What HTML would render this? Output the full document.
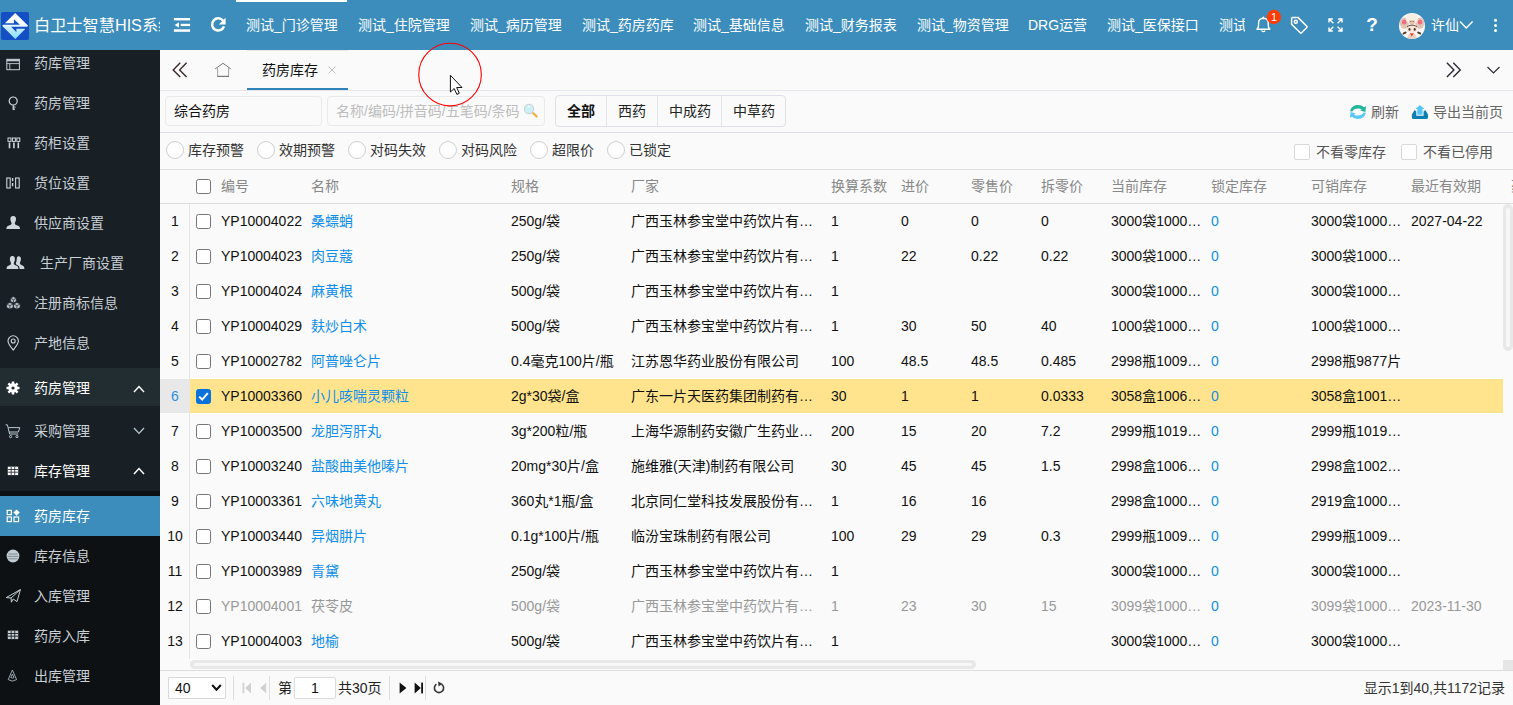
<!DOCTYPE html>
<html lang="zh-CN">
<head>
<meta charset="utf-8">
<title>白卫士智慧HIS系统</title>
<style>
*{box-sizing:border-box}
html,body{margin:0;padding:0}
body{width:1513px;height:705px;overflow:hidden;position:relative;background:#fafafa;
 font-family:"Liberation Sans","Noto Sans CJK SC",sans-serif;font-size:14px;color:#111;line-height:1}
.abs{position:absolute}
#hd{position:absolute;left:0;top:0;width:1513px;height:50px;background:#3c8dbc;color:#fff}
#hd .nav{position:absolute;top:0;height:50px;line-height:50px;white-space:nowrap;font-size:14px}
#logo{position:absolute;left:0;top:0;width:160px;height:50px;overflow:hidden;white-space:nowrap}
#logo .t{position:absolute;left:34px;top:0;line-height:50px;font-size:16.2px}
#sb{position:absolute;left:0;top:50px;width:160px;height:655px;background:#181f25;overflow:hidden;color:#c8d0d5}
#sb .it{position:absolute;left:0;width:160px;height:40px;line-height:40px;white-space:nowrap}
#sb .it span{position:absolute;top:0}
#sb .it svg{position:absolute}
#tabs{position:absolute;left:160px;top:50px;width:1353px;height:41px;border-bottom:1px solid #e4e6ec;background:#fafafa}
.tx{position:absolute;white-space:nowrap;line-height:20px;height:20px}
.hl{position:absolute;height:1px;background:#e2e4ea}
#grid{position:absolute;left:160px;top:169px;width:1353px;height:490px;overflow:hidden}
.row{position:absolute;left:0;width:1343px;height:35px;line-height:35px;overflow:hidden}
.row.hdr{width:1353px}
.row .c{position:absolute;top:0;height:35px;white-space:nowrap;overflow:hidden;text-overflow:ellipsis;padding:0 4px}
.row .n{left:0;width:30px;text-align:center;padding:0}
.cb{position:absolute;left:36px;top:10px;width:15px;height:15px;border:1.5px solid #767676;border-radius:2.5px;background:#fff}
.cb.on{background:#0b72dc;border-color:#0b72dc}
.c1{left:57px;width:90px}.c2{left:147px;width:200px;color:#108ee9}.c3{left:347px;width:120px}.c4{left:467px;width:200px}
.c5{left:667px;width:70px}.c6{left:737px;width:70px}.c7{left:807px;width:70px}.c8{left:877px;width:70px}
.c9{left:947px;width:100px}.c10{left:1047px;width:100px;color:#108ee9}.c11{left:1147px;width:100px}.c12{left:1247px;width:100px}
.hdr{color:#888}
.hdr .c{height:34px}
.hdr .c2,.hdr .c10{color:#888}
.sel .bg{position:absolute;left:30px;top:0;width:1313px;height:34px;background:#ffe48d}
.dis{color:#999}.dis .c2{color:#999}
.rd{position:absolute;top:141px;width:18px;height:18px;border:1px solid #cfcfcf;border-radius:50%;background:#fff}
.ck{position:absolute;top:144px;width:16px;height:16px;border:1px solid #d9d9d9;border-radius:2px;background:#fff}

</style>
</head>
<body>
<div id="hd"><div class="abs" style="left:236px;top:0;width:111px;height:2px;background:#fff"></div><svg class="abs" style="left:1px;top:12px" width="28" height="28" viewBox="0 0 28 28"><defs><linearGradient id="lg" x1="0" y1="0" x2="0" y2="1"><stop offset="0" stop-color="#fff"/><stop offset="0.42" stop-color="#f8fdff"/><stop offset="0.55" stop-color="#cfeeff"/><stop offset="1" stop-color="#82e0ff"/></linearGradient></defs><rect width="28" height="28" rx="1.8" fill="#1450c4"/><path d="M14.2 0.9 L27.1 13.8 L26.1 14.85 L18.9 14.85 L18.9 12.86 L1.9 12.86 L1.3 14 L14.3 26.9 L24.4 16.8 L10.1 16.8 L10.1 14.85 L15.4 20.2 L15.4 16.8 L10.1 16.8 L10.1 14.85 L18.9 14.85 L18.9 12.86 L12.9 7.2 L12.9 11.16 L4 11.16 Z" fill="url(#lg)" fill-rule="evenodd"/></svg>
<div id="logo"><span class="t">白卫士智慧HIS系统</span></div><svg class="abs" style="left:173px;top:17px" width="19" height="16" viewBox="0 0 19 16" fill="#fff"><rect x="0.9" y="1" width="16.2" height="2.4"/><rect x="7.7" y="6.8" width="9.4" height="2.3"/><rect x="0.9" y="12.3" width="16.2" height="2.5"/><path d="M1.7 8 L6 5.3 V10.7 Z"/></svg>
<svg class="abs" style="left:209px;top:16px" width="18" height="18" viewBox="0 0 18 18"><path d="M14.2 4.9 A6.1 6.1 0 1 0 15 10.4" fill="none" stroke="#fff" stroke-width="2.5"/><path d="M16.6 1.8 V8.6 H9.8 Z" fill="#fff"/></svg>
<svg class="abs" style="left:1254px;top:8px" width="30" height="28" viewBox="0 0 30 28"><path d="M9.3 8.8 a1.2 1.2 0 0 1 -0.6 1.1 M3 21.2 H15.8 Q14.2 19.6 14.2 16.4 V14.6 Q14.2 10.4 9.4 10.2 Q4.6 10.4 4.6 14.6 V16.4 Q4.6 19.6 3 21.2 Z" fill="none" stroke="#fff" stroke-width="1.4" stroke-linejoin="round"/><path d="M7.6 22.6 Q9.4 24.6 11.2 22.6" fill="none" stroke="#fff" stroke-width="1.4"/><circle cx="9.4" cy="9.6" r="0.9" fill="#fff"/><circle cx="19.9" cy="9" r="7.2" fill="#ff3d00"/></svg>
<div class="abs" style="left:1267px;top:10px;width:14px;height:14px;line-height:14px;text-align:center;font-size:11px;color:#fff">1</div>
<svg class="abs" style="left:1290px;top:16px" width="19" height="19" viewBox="0 0 19 19" fill="none" stroke="#fff" stroke-width="1.5" stroke-linejoin="round"><path d="M1.6 2.6 Q1.6 1.6 2.6 1.6 H8.2 L16.8 10.2 Q17.4 10.9 16.8 11.5 L11.5 16.8 Q10.9 17.4 10.2 16.8 L1.6 8.2 Z"/><circle cx="5.8" cy="5.8" r="1.5"/></svg>
<svg class="abs" style="left:1328px;top:18px" width="15" height="14" viewBox="0 0 15 14" fill="none" stroke="#fff" stroke-width="1.4"><path d="M1 4.6 V1 H4.8 M1 1 L5.4 5.2 M10.2 1 H14 V4.6 M14 1 L9.6 5.2 M1 9.4 V13 H4.8 M1 13 L5.4 8.8 M10.2 13 H14 V9.4 M14 13 L9.6 8.8"/></svg>
<div class="abs" style="left:1366px;top:14px;width:12px;height:22px;line-height:22px;font-size:19px;font-weight:bold;color:#fff;text-align:center">?</div>
<svg class="abs" style="left:1398px;top:12px" width="28" height="28" viewBox="0 0 28 28"><defs><clipPath id="av"><circle cx="14" cy="14" r="13"/></clipPath></defs><circle cx="14" cy="14" r="13" fill="#fdf8f6"/><g clip-path="url(#av)"><ellipse cx="6.4" cy="11.2" rx="4.5" ry="5.6" fill="#e3c3b2"/><ellipse cx="21.8" cy="11.2" rx="4.5" ry="5.6" fill="#e3c3b2"/><ellipse cx="6.2" cy="10" rx="2.3" ry="2.5" fill="#ef6c84"/><ellipse cx="22" cy="10" rx="2.3" ry="2.5" fill="#ef6c84"/><ellipse cx="14" cy="6.8" rx="6" ry="5.4" fill="#f7eee4"/><ellipse cx="14" cy="10" rx="3" ry="2" fill="#e2c2ac"/><circle cx="12.8" cy="9.6" r="0.5" fill="#6a4a3a"/><circle cx="15.2" cy="9.6" r="0.5" fill="#6a4a3a"/><path d="M9 14.6 Q14 10.4 19 14.6 L18.6 15.4 Q14 12.6 9.4 15.4 Z" fill="#4e3426"/><ellipse cx="14" cy="17.3" rx="5.2" ry="3.8" fill="#fbe4dc"/><ellipse cx="11.5" cy="17.4" rx="1" ry="1.3" fill="#3a3418"/><ellipse cx="16.7" cy="17.4" rx="1" ry="1.3" fill="#3a3418"/><ellipse cx="6.6" cy="21" rx="2.2" ry="1.2" transform="rotate(-25 6.6 21)" fill="#5a3e30"/><ellipse cx="21.2" cy="21" rx="2.2" ry="1.2" transform="rotate(25 21.2 21)" fill="#5a3e30"/><path d="M9.4 27 Q9.6 22.6 12 21.8 H16 Q18.4 22.6 18.6 27 Z" fill="#ead0c0"/><path d="M11.8 21.2 H15.8 L13.8 24.4 Z" fill="#f0402a"/></g></svg>
<svg class="abs" style="left:1459px;top:20px" width="15" height="10" viewBox="0 0 15 10" fill="none" stroke="#fff" stroke-width="1.4"><path d="M1 1.4 L7.2 8 L13.6 1.4"/></svg>
<svg class="abs" style="left:1492px;top:18px" width="7" height="15" viewBox="0 0 7 15" fill="#fff"><circle cx="3.5" cy="2.2" r="1.5"/><circle cx="3.5" cy="7.4" r="1.5"/><circle cx="3.5" cy="12.6" r="1.5"/></svg>
<div class="nav" style="left:246px">测试_门诊管理</div><div class="nav" style="left:358px">测试_住院管理</div><div class="nav" style="left:470px">测试_病历管理</div><div class="nav" style="left:582px">测试_药房药库</div><div class="nav" style="left:693px">测试_基础信息</div><div class="nav" style="left:805px">测试_财务报表</div><div class="nav" style="left:917px">测试_物资管理</div><div class="nav" style="left:1028px">DRG运营</div><div class="nav" style="left:1107px">测试_医保接口</div><div class="nav" style="left:1219px;width:26px;overflow:hidden">测试_</div><div class="nav" style="left:1431px">许仙</div></div>
<div id="sb"><div class="abs" style="left:0;top:318px;width:160px;height:38px;background:#222d32"></div><div class="abs" style="left:0;top:441px;width:160px;height:214px;background:#0d1114"></div><div class="abs" style="left:0;top:446px;width:160px;height:40px;background:#3c8dbc"></div><div class="it" style="top:-7px"><svg style="left:6px;top:14.5px" width="15" height="13" viewBox="0 0 15 13" fill="none" stroke="#c2cdd3"><rect x="0.8" y="1.3" width="12.6" height="10.4" stroke-width="1"/><path d="M0.8 2.3 H13.4" stroke-width="2"/><path d="M0.8 5.6 H13.4 M3.8 5.6 V11.6" stroke-width="0.9"/></svg><span style="left:34px">药库管理</span></div><div class="it" style="top:33px"><svg style="left:8px;top:13px" width="11" height="15" viewBox="0 0 11 15" fill="none" stroke="#cfd8dc" stroke-width="1.2"><circle cx="5.2" cy="5" r="4"/><path d="M5.2 9 V14 M5.2 11 H7.6 M5.2 13.2 H7"/></svg><span style="left:34px">药房管理</span></div><div class="it" style="top:73px"><svg style="left:7px;top:14px" width="14" height="12" viewBox="0 0 14 12" fill="none" stroke="#cfd8dc" stroke-width="1"><rect x="1" y="1" width="3" height="3.4"/><rect x="5.4" y="1" width="3" height="3.4"/><rect x="9.8" y="1" width="3" height="3.4"/><path d="M2.5 5.6 V11.2 M6.9 5.6 V11.2 M11.3 5.6 V11.2" stroke-width="1.6"/></svg><span style="left:34px">药柜设置</span></div><div class="it" style="top:113px"><svg style="left:6px;top:14px" width="15" height="12" viewBox="0 0 15 12" fill="none" stroke="#cfd8dc" stroke-width="1.1"><rect x="0.8" y="1" width="3.4" height="10"/><rect x="9.6" y="1" width="3.6" height="10"/><path d="M6.6 1 V11" stroke-width="1.4" stroke-dasharray="3.2 1.8"/></svg><span style="left:34px">货位设置</span></div><div class="it" style="top:153px"><svg style="left:6px;top:12px" width="15" height="15" viewBox="0 0 15 15" fill="#cfd8dc"><path d="M7.2 0.9 C9.4 0.9 10.2 2.6 10 4.6 C9.8 6.4 9 7.4 8.8 8.2 C8.8 9.6 10.2 10 12 10.8 C13.6 11.5 14 12.4 14 14 H0.4 C0.4 12.4 0.8 11.5 2.4 10.8 C4.2 10 5.6 9.6 5.6 8.2 C5.4 7.4 4.6 6.4 4.4 4.6 C4.2 2.6 5 0.9 7.2 0.9 Z"/></svg><span style="left:34px">供应商设置</span></div><div class="it" style="top:193px"><svg style="left:6px;top:12px" width="20" height="15" viewBox="0 0 20 15" fill="#cfd8dc"><path d="M6.4 0.9 C8.4 0.9 9.1 2.6 8.9 4.6 C8.7 6.4 8 7.4 7.8 8.2 C7.8 9.6 9 10 10.6 10.8 C12.1 11.5 12.4 12.4 12.4 14 H0.6 C0.6 12.4 0.9 11.5 2.4 10.8 C4 10 5 9.6 5 8.2 C4.8 7.4 4.1 6.4 3.9 4.6 C3.7 2.6 4.4 0.9 6.4 0.9 Z"/><path d="M12.6 1.2 C14.5 1.2 15.1 2.8 14.9 4.6 C14.7 6.3 14.1 7.2 13.9 8 C13.9 9.3 15 9.8 16.4 10.5 C17.9 11.2 18.4 12 18.4 14 H13.6 C13.6 12 13 10.8 11.2 10 C10.2 9.5 9.8 9 9.8 8.2 C10.3 7.2 10.7 6 10.7 4.2 C10.7 2.6 11.3 1.2 12.6 1.2 Z"/></svg><span style="left:40px">生产厂商设置</span></div><div class="it" style="top:233px"><svg style="left:6px;top:13px" width="15" height="14" viewBox="0 0 15 14" fill="#b9c4ca" stroke="#191e24" stroke-width="0.7"><path d="M7.4 0.6 L10.4 2.2 V5.4 L7.4 7 L4.4 5.4 V2.2 Z"/><path d="M3.9 6.4 L7.2 8 V11.6 L3.9 13.2 L0.6 11.6 V8 Z"/><path d="M10.9 6.4 L14.2 8 V11.6 L10.9 13.2 L7.6 11.6 V8 Z"/><path d="M4.4 2.2 L7.4 3.8 L10.4 2.2 M7.4 3.8 V7 M0.6 8 L3.9 9.6 L7.2 8 M3.9 9.6 V13.2 M7.6 8 L10.9 9.6 L14.2 8 M10.9 9.6 V13.2" fill="none"/></svg><span style="left:34px">注册商标信息</span></div><div class="it" style="top:273px"><svg style="left:7px;top:12.4px" width="13" height="16" viewBox="0 0 13 16" fill="none" stroke="#cfd8dc" stroke-width="1.1"><path d="M6.2 15 C3 11 1 8.6 1 6 A5.2 5.2 0 0 1 11.4 6 C11.4 8.6 9.4 11 6.2 15 Z"/><circle cx="6.2" cy="6" r="2"/></svg><span style="left:34px">产地信息</span></div><div class="it" style="top:318px;color:#fff"><svg style="left:6px;top:13.4px" width="14" height="14" viewBox="0 0 14 14"><g stroke="#fff" stroke-width="2.5"><path d="M7 0.5 V13.5 M0.5 7 H13.5 M2.4 2.4 L11.6 11.6 M2.4 11.6 L11.6 2.4"/></g><circle cx="7" cy="7" r="4.7" fill="#fff"/><circle cx="7" cy="7" r="1.6" fill="#222d32"/></svg><svg style="left:133px;top:16.6px" width="12" height="8" viewBox="0 0 12 8" fill="none" stroke="#fff" stroke-width="1.5"><path d="M1 7 L6 1.6 L11 7"/></svg><span style="left:34px">药房管理</span></div><div class="it" style="top:361px"><svg style="left:5px;top:12.7px" width="16" height="15" viewBox="0 0 16 15" fill="none" stroke="#b8c7ce" stroke-width="1"><path d="M0.6 0.8 H2.4 L4.6 10 H13.2 M3.4 3.6 H14.8 L13.4 8 H4.2"/><circle cx="5.6" cy="12.6" r="1.1"/><circle cx="12" cy="12.6" r="1.1"/></svg><svg style="left:133px;top:16.4px" width="12" height="8" viewBox="0 0 12 8" fill="none" stroke="#b8c7ce" stroke-width="1.3"><path d="M1 1 L6 6.4 L11 1"/></svg><span style="left:34px">采购管理</span></div><div class="it" style="top:401px;color:#fff"><svg style="left:7px;top:15px" width="12" height="10" viewBox="0 0 12 10"><rect x="0.8" y="0.7" width="10.4" height="8.4" fill="#fff"/><path d="M1 3.5 H11 M1 6.2 H11 M4.2 1 V9 M7.7 1 V9" stroke="#191e24" stroke-width="0.8"/></svg><svg style="left:133px;top:16.4px" width="12" height="8" viewBox="0 0 12 8" fill="none" stroke="#fff" stroke-width="1.5"><path d="M1 7 L6 1.6 L11 7"/></svg><span style="left:34px">库存管理</span></div><div class="it" style="top:446px;color:#fff"><svg style="left:6px;top:13.4px" width="15" height="14" viewBox="0 0 15 14" fill="none" stroke="#fff" stroke-width="1.2"><rect x="1.2" y="1.4" width="4.2" height="4.2"/><rect x="1.2" y="8" width="4.2" height="4.6"/><rect x="8" y="8" width="4.6" height="4.6"/><path d="M10.6 0.4 L13.8 3.6 L10.6 6.8 L7.4 3.6 Z" fill="#fff" stroke="none"/></svg><span style="left:34px">药房库存</span></div><div class="it" style="top:486px"><svg style="left:6px;top:12.8px" width="14" height="14" viewBox="0 0 14 14"><circle cx="7" cy="7" r="6.4" fill="#c2cdd3"/><path d="M2.4 5 H11.6 M1.6 7.4 H12.4 M2.6 9.8 H11.4" stroke="#6f7b82" stroke-width="0.8"/></svg><span style="left:34px">库存信息</span></div><div class="it" style="top:526px"><svg style="left:5px;top:12px" width="17" height="16" viewBox="0 0 17 16" fill="none" stroke="#c2cdd3" stroke-width="1" stroke-linejoin="round"><path d="M1.2 9.6 L15.4 1.6 L12 13.6 L8.2 11 L6.4 14.2 L6 10 Z M6 10 L15.4 1.6"/></svg><span style="left:34px">入库管理</span></div><div class="it" style="top:566px"><svg style="left:7px;top:14px" width="12" height="10" viewBox="0 0 12 10"><rect x="0.8" y="0.7" width="10.4" height="8.4" fill="#c2cdd3"/><path d="M1 3.5 H11 M1 6.2 H11 M4.2 1 V9 M7.7 1 V9" stroke="#0d1114" stroke-width="0.8"/></svg><span style="left:34px">药房入库</span></div><div class="it" style="top:606px"><svg style="left:7px;top:13.2px" width="11" height="14" viewBox="0 0 11 14" fill="none" stroke="#aab6bc" stroke-width="0.9"><path d="M5.4 1 L9.6 10.6 Q5.4 13.6 1.2 10.6 Z"/><path d="M5.4 5 L7 8.6 Q5.4 9.6 3.8 8.6 Z"/></svg><span style="left:34px">出库管理</span></div></div>
<div id="tabs">
<div class="abs" style="left:87px;top:0;width:101px;height:1px;background:#e8e8ee"></div>
<svg class="abs" style="left:11px;top:12px" width="18" height="16" viewBox="0 0 18 16" fill="none" stroke="#3a2a2a" stroke-width="1.4"><path d="M9.2 0.8 L2.2 7.95 L9.2 15.1 M15.6 0.8 L8.6 7.95 L15.6 15.1"/></svg>
<svg class="abs" style="left:53px;top:12px" width="20" height="17" viewBox="0 0 20 17" fill="none" stroke="#777" stroke-width="1"><path d="M2.2 6.9 L10 1.3 L17.8 6.9"/><path d="M4.6 5.6 V14.3 M15.6 5.6 V14.3" stroke="#999" stroke-width="0.9"/><path d="M4.2 14.4 H16" stroke-width="1.2"/></svg>
<div class="tx" style="left:102px;top:10px;color:#111">药房库存</div>
<svg class="abs" style="left:167px;top:15px" width="10" height="10" viewBox="0 0 10 10" stroke="#c0c0c0" stroke-width="1"><path d="M1.5 1.5 L8.5 8.5 M8.5 1.5 L1.5 8.5"/></svg>
<div class="abs" style="left:87px;top:38px;width:101px;height:2px;background:#2e82b8"></div>
<svg class="abs" style="left:1285px;top:12px" width="17" height="16" viewBox="0 0 17 16" fill="none" stroke="#2a2a3a" stroke-width="1.4"><path d="M1.9 0.8 L8.9 7.95 L1.9 15.1 M8.3 0.8 L15.3 7.95 L8.3 15.1"/></svg>
<svg class="abs" style="left:1326px;top:15px" width="15" height="10" viewBox="0 0 15 10" fill="none" stroke="#2a2a3a" stroke-width="1.15"><path d="M1.5 2 L7.5 7.9 L13.5 2"/></svg>
</div>

<div class="abs" style="left:165px;top:96px;width:157px;height:30px;border:1px solid #eaeaea;border-radius:4px;background:#fafafa"></div>
<div class="tx" style="left:174px;top:101px;color:#111">综合药房</div>
<div class="abs" style="left:327px;top:96px;width:218px;height:30px;border:1px solid #eaeaea;border-radius:4px;background:#fafafa"></div>
<div class="tx" style="left:336px;top:101px;color:#bdbdbd;width:184px;overflow:hidden">名称/编码/拼音码/五笔码/条码</div>
<svg class="abs" style="left:523px;top:103px" width="16" height="16" viewBox="0 0 16 16"><path d="M10 10 L13.7 13.5" stroke="#efb044" stroke-width="2.2" stroke-linecap="round"/><circle cx="6" cy="6" r="4.6" fill="#cdf0f6" stroke="#cdd3d6" stroke-width="1.1"/><circle cx="5.6" cy="3.6" r="1" fill="#f4fdff"/></svg>
<div class="abs" style="left:555px;top:95px;width:231px;height:32px;border:1px solid #dfe1e8;border-radius:4px;background:#fafafa"></div>
<div class="abs" style="left:606px;top:96px;width:1px;height:30px;background:#e2e4ea"></div>
<div class="abs" style="left:657px;top:96px;width:1px;height:30px;background:#e2e4ea"></div>
<div class="abs" style="left:721px;top:96px;width:1px;height:30px;background:#e2e4ea"></div>
<div class="tx" style="left:567px;top:101px;color:#111;font-weight:bold">全部</div>
<div class="tx" style="left:618px;top:101px;color:#222">西药</div>
<div class="tx" style="left:669px;top:101px;color:#222">中成药</div>
<div class="tx" style="left:733px;top:101px;color:#222">中草药</div>
<svg class="abs" style="left:1350px;top:105px" width="17" height="14" viewBox="0 0 17 14"><path d="M0.2 6.2 C0.6 2.6 4 0.1 8 0.1 C10.4 0.1 12.4 0.9 13.8 2.2 L16 1.2 L15.4 7 L10.2 5.6 L12 4.6 C11 3.8 9.6 3.4 8 3.4 C5.2 3.4 3.2 4.6 2.4 6.4 Z" fill="#20b69a"/><path d="M15.8 7.8 C15.4 11.4 12 13.9 8 13.9 C5.6 13.9 3.6 13.1 2.2 11.8 L0 12.8 L0.6 7 L5.8 8.4 L4 9.4 C5 10.2 6.4 10.6 8 10.6 C10.8 10.6 12.8 9.4 13.6 7.6 Z" fill="#58c9f6"/></svg>
<div class="tx" style="left:1371px;top:102px;color:#666">刷新</div>
<svg class="abs" style="left:1411px;top:105px" width="18" height="14" viewBox="-0.9 0 18 14"><path d="M2.7 5.1 L4.4 6.4 V10.7 H11.7 V6.4 L13.4 5.1 L16.1 9.4 V12.6 Q16.1 13.9 14.8 13.9 H1.3 Q0 13.9 0 12.6 V9.4 Z" fill="#0e7fb2"/><path d="M8.05 0 L12.5 3.9 H10.7 V9.8 H5.35 V3.9 H3.6 Z" fill="#55c8f8"/></svg>
<div class="tx" style="left:1433px;top:102px;color:#666">导出当前页</div>
<div class="hl" style="left:160px;top:132px;width:1353px;background:#dcdfe8"></div>
<!-- filter row -->
<div class="rd" style="left:166px"></div><div class="tx" style="left:188px;top:140px;color:#333">库存预警</div>
<div class="rd" style="left:257px"></div><div class="tx" style="left:279px;top:140px;color:#333">效期预警</div>
<div class="rd" style="left:348px"></div><div class="tx" style="left:370px;top:140px;color:#333">对码失效</div>
<div class="rd" style="left:439px"></div><div class="tx" style="left:461px;top:140px;color:#333">对码风险</div>
<div class="rd" style="left:530px"></div><div class="tx" style="left:552px;top:140px;color:#333">超限价</div>
<div class="rd" style="left:607px"></div><div class="tx" style="left:629px;top:140px;color:#333">已锁定</div>
<div class="ck" style="left:1294px"></div><div class="tx" style="left:1316px;top:142px;color:#555">不看零库存</div>
<div class="ck" style="left:1401px"></div><div class="tx" style="left:1423px;top:142px;color:#555">不看已停用</div>
<div class="hl" style="left:160px;top:169px;width:1353px;background:#dedede"></div>

<div id="grid"><div class="row hdr" style="top:0;height:34px;line-height:34px"><div class="cb"></div><div class="c c1">编号</div><div class="c c2">名称</div><div class="c c3">规格</div><div class="c c4">厂家</div><div class="c c5">换算系数</div><div class="c c6">进价</div><div class="c c7">零售价</div><div class="c c8">拆零价</div><div class="c c9">当前库存</div><div class="c c10">锁定库存</div><div class="c c11">可销库存</div><div class="c c12">最近有效期</div><div class="c" style="left:1347px;width:20px">药</div></div><div class="abs" style="left:29px;top:34px;width:1px;height:456px;background:#e6e6e6"></div><div class="abs" style="left:0;top:34px;width:1353px;height:1px;background:#dcdcdc"></div><div class="row" style="top:35px"><div class="c n" style="color:#111">1</div><div class="cb"></div><div class="c c1">YP10004022</div><div class="c c2">桑螵蛸</div><div class="c c3">250g/袋</div><div class="c c4">广西玉林参宝堂中药饮片有限公司</div><div class="c c5">1</div><div class="c c6">0</div><div class="c c7">0</div><div class="c c8">0</div><div class="c c9">3000袋10000克</div><div class="c c10">0</div><div class="c c11">3000袋10000克</div><div class="c c12">2027-04-22</div></div><div class="row" style="top:70px"><div class="c n" style="color:#111">2</div><div class="cb"></div><div class="c c1">YP10004023</div><div class="c c2">肉豆蔻</div><div class="c c3">250g/袋</div><div class="c c4">广西玉林参宝堂中药饮片有限公司</div><div class="c c5">1</div><div class="c c6">22</div><div class="c c7">0.22</div><div class="c c8">0.22</div><div class="c c9">3000袋10000克</div><div class="c c10">0</div><div class="c c11">3000袋10000克</div><div class="c c12"></div></div><div class="row" style="top:105px"><div class="c n" style="color:#111">3</div><div class="cb"></div><div class="c c1">YP10004024</div><div class="c c2">麻黄根</div><div class="c c3">500g/袋</div><div class="c c4">广西玉林参宝堂中药饮片有限公司</div><div class="c c5">1</div><div class="c c6"></div><div class="c c7"></div><div class="c c8"></div><div class="c c9">3000袋10000克</div><div class="c c10">0</div><div class="c c11">3000袋10000克</div><div class="c c12"></div></div><div class="row" style="top:140px"><div class="c n" style="color:#111">4</div><div class="cb"></div><div class="c c1">YP10004029</div><div class="c c2">麸炒白术</div><div class="c c3">500g/袋</div><div class="c c4">广西玉林参宝堂中药饮片有限公司</div><div class="c c5">1</div><div class="c c6">30</div><div class="c c7">50</div><div class="c c8">40</div><div class="c c9">1000袋10000克</div><div class="c c10">0</div><div class="c c11">1000袋10000克</div><div class="c c12"></div></div><div class="row" style="top:175px"><div class="c n" style="color:#111">5</div><div class="cb"></div><div class="c c1">YP10002782</div><div class="c c2">阿普唑仑片</div><div class="c c3">0.4毫克100片/瓶</div><div class="c c4">江苏恩华药业股份有限公司</div><div class="c c5">100</div><div class="c c6">48.5</div><div class="c c7">48.5</div><div class="c c8">0.485</div><div class="c c9">2998瓶10090片</div><div class="c c10">0</div><div class="c c11">2998瓶9877片</div><div class="c c12"></div></div><div class="row sel" style="top:210px"><div class="abs" style="left:0;top:0;width:29px;height:34px;background:#e8e8e8"></div><div class="bg"></div><div class="c n" style="color:#2a8fdc">6</div><div class="cb on"><svg width="15" height="15" viewBox="0 0 15 15" style="position:absolute;left:-1.5px;top:-1.5px"><path d="M3.2 7.6 L6.2 10.6 L11.8 4.2" fill="none" stroke="#fff" stroke-width="2"/></svg></div><div class="c c1">YP10003360</div><div class="c c2">小儿咳喘灵颗粒</div><div class="c c3">2g*30袋/盒</div><div class="c c4">广东一片天医药集团制药有限公司</div><div class="c c5">30</div><div class="c c6">1</div><div class="c c7">1</div><div class="c c8">0.0333</div><div class="c c9">3058盒10060袋</div><div class="c c10">0</div><div class="c c11">3058盒10010袋</div><div class="c c12"></div></div><div class="row" style="top:245px"><div class="c n" style="color:#111">7</div><div class="cb"></div><div class="c c1">YP10003500</div><div class="c c2">龙胆泻肝丸</div><div class="c c3">3g*200粒/瓶</div><div class="c c4">上海华源制药安徽广生药业有限公司</div><div class="c c5">200</div><div class="c c6">15</div><div class="c c7">20</div><div class="c c8">7.2</div><div class="c c9">2999瓶10190粒</div><div class="c c10">0</div><div class="c c11">2999瓶10190粒</div><div class="c c12"></div></div><div class="row" style="top:280px"><div class="c n" style="color:#111">8</div><div class="cb"></div><div class="c c1">YP10003240</div><div class="c c2">盐酸曲美他嗪片</div><div class="c c3">20mg*30片/盒</div><div class="c c4">施维雅(天津)制药有限公司</div><div class="c c5">30</div><div class="c c6">45</div><div class="c c7">45</div><div class="c c8">1.5</div><div class="c c9">2998盒10060片</div><div class="c c10">0</div><div class="c c11">2998盒10020片</div><div class="c c12"></div></div><div class="row" style="top:315px"><div class="c n" style="color:#111">9</div><div class="cb"></div><div class="c c1">YP10003361</div><div class="c c2">六味地黄丸</div><div class="c c3">360丸*1瓶/盒</div><div class="c c4">北京同仁堂科技发展股份有限公司</div><div class="c c5">1</div><div class="c c6">16</div><div class="c c7">16</div><div class="c c8"></div><div class="c c9">2998盒10000瓶</div><div class="c c10">0</div><div class="c c11">2919盒10000瓶</div><div class="c c12"></div></div><div class="row" style="top:350px"><div class="c n" style="color:#111">10</div><div class="cb"></div><div class="c c1">YP10003440</div><div class="c c2">异烟肼片</div><div class="c c3">0.1g*100片/瓶</div><div class="c c4">临汾宝珠制药有限公司</div><div class="c c5">100</div><div class="c c6">29</div><div class="c c7">29</div><div class="c c8">0.3</div><div class="c c9">2999瓶10090片</div><div class="c c10">0</div><div class="c c11">2999瓶10090片</div><div class="c c12"></div></div><div class="row" style="top:385px"><div class="c n" style="color:#111">11</div><div class="cb"></div><div class="c c1">YP10003989</div><div class="c c2">青黛</div><div class="c c3">250g/袋</div><div class="c c4">广西玉林参宝堂中药饮片有限公司</div><div class="c c5">1</div><div class="c c6"></div><div class="c c7"></div><div class="c c8"></div><div class="c c9">3000袋10000克</div><div class="c c10">0</div><div class="c c11">3000袋10000克</div><div class="c c12"></div></div><div class="row dis" style="top:420px"><div class="c n" style="color:#111">12</div><div class="cb"></div><div class="c c1">YP10004001</div><div class="c c2">茯苓皮</div><div class="c c3">500g/袋</div><div class="c c4">广西玉林参宝堂中药饮片有限公司</div><div class="c c5">1</div><div class="c c6">23</div><div class="c c7">30</div><div class="c c8">15</div><div class="c c9">3099袋10000克</div><div class="c c10">0</div><div class="c c11">3099袋10000克</div><div class="c c12">2023-11-30</div></div><div class="row" style="top:455px"><div class="c n" style="color:#111">13</div><div class="cb"></div><div class="c c1">YP10004003</div><div class="c c2">地榆</div><div class="c c3">500g/袋</div><div class="c c4">广西玉林参宝堂中药饮片有限公司</div><div class="c c5">1</div><div class="c c6"></div><div class="c c7"></div><div class="c c8"></div><div class="c c9">3000袋10000克</div><div class="c c10">0</div><div class="c c11">3000袋10000克</div><div class="c c12"></div></div></div>
<div class="abs" style="left:1503px;top:204px;width:10px;height:456px;background:#fafafa"></div>
<div class="abs" style="left:1503px;top:204px;width:10px;height:147px;border-radius:5px;background:#e8e8e8"></div><div class="abs" style="left:1506px;top:208px;width:4px;height:139px;border-radius:2px;background:#f7f7f7"></div>
<div class="abs" style="left:190px;top:660px;width:786px;height:9px;border-radius:5px;background:#e8e8e8"></div><div class="abs" style="left:194px;top:663px;width:778px;height:3px;border-radius:2px;background:#f7f7f7"></div>
<div class="abs" style="left:1503px;top:660px;width:10px;height:10px;background:#e6e6e6"></div>
<div class="hl" style="left:160px;top:670px;width:1353px;background:#ddd"></div>
<div class="abs" style="left:168px;top:677px;width:58px;height:22px;border:1px solid #d9d9d9;background:#fff;border-radius:1px"></div>
<div class="tx" style="left:175px;top:678px;color:#111">40</div>
<svg class="abs" style="left:211px;top:683px" width="11" height="9" viewBox="0 0 11 9" fill="none" stroke="#111" stroke-width="2.1"><path d="M1.2 2 L5.5 6.6 L9.8 2"/></svg>
<div class="abs" style="left:233px;top:676px;width:1px;height:24px;background:#ddd"></div>
<svg class="abs" style="left:242px;top:682px" width="10" height="12" viewBox="0 0 10 12" fill="#d0d0d0"><rect x="0.5" y="0.8" width="1.8" height="10.4"/><path d="M9 0.8 L3.2 6 L9 11.2 Z"/></svg>
<svg class="abs" style="left:259px;top:682px" width="8" height="12" viewBox="0 0 8 12" fill="#d0d0d0"><path d="M7.2 0.8 L1.2 6 L7.2 11.2 Z"/></svg>
<div class="abs" style="left:269px;top:676px;width:1px;height:24px;background:#ddd"></div>
<div class="tx" style="left:278px;top:678px;color:#222">第</div>
<div class="abs" style="left:294px;top:677px;width:42px;height:22px;border:1px solid #ddd;background:#fff;border-radius:2px"></div>
<div class="tx" style="left:311px;top:678px;color:#111">1</div>
<div class="tx" style="left:338px;top:678px;color:#222">共30页</div>
<div class="abs" style="left:389px;top:676px;width:1px;height:24px;background:#ddd"></div>
<svg class="abs" style="left:399px;top:682px" width="8" height="12" viewBox="0 0 8 12" fill="#111"><path d="M0.6 0.6 L7.4 6 L0.6 11.4 Z"/></svg>
<svg class="abs" style="left:414px;top:682px" width="10" height="12" viewBox="0 0 10 12" fill="#111"><path d="M0.6 0.6 L6.8 6 L0.6 11.4 Z"/><rect x="7.2" y="0.6" width="1.8" height="10.8"/></svg>
<div class="abs" style="left:425px;top:676px;width:1px;height:24px;background:#ddd"></div>
<svg class="abs" style="left:432px;top:681px" width="14" height="14" viewBox="0 0 14 14" fill="none" stroke="#333" stroke-width="1.6"><path d="M9.6 3.2 A4.6 4.6 0 1 1 4.4 3.2"/><path d="M6 0.4 L10.4 2.8 L6.6 5.6 Z" fill="#333" stroke="none"/></svg>
<div class="tx" style="right:8px;top:678px;color:#333">显示1到40,共1172记录</div>

<svg class="abs" style="left:410px;top:35px" width="80" height="80" viewBox="0 0 80 80"><circle cx="40.05" cy="39.55" r="31.3" fill="none" stroke="#f00" stroke-width="1.1"/>
<path d="M40.4 40.3 V57 L44.2 53.5 L46.9 59.4 L49.3 58.3 L46.7 52.5 H52 Z" fill="#fff" stroke="#111" stroke-width="1" stroke-linejoin="miter"/></svg>
</body>
</html>
